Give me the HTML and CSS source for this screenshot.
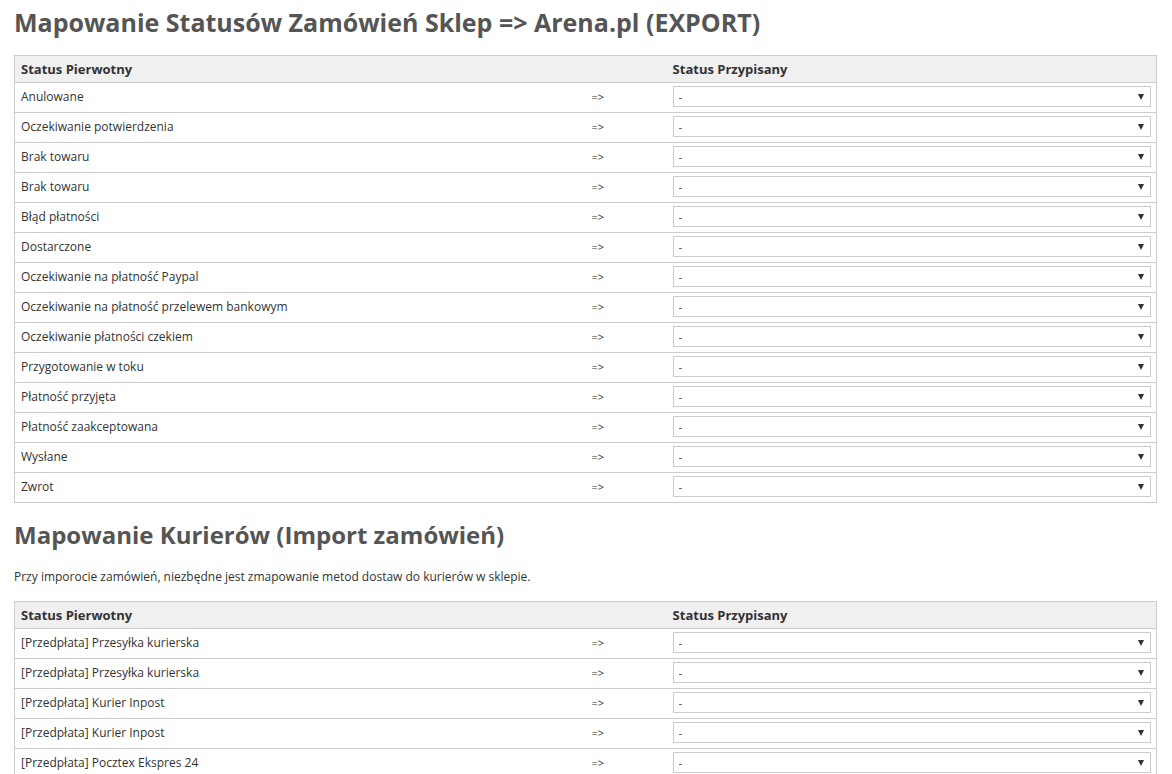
FILE: index.html
```html
<!DOCTYPE html>
<html lang="pl">
<head>
    <meta charset="UTF-8">
    <title>Mapowanie statusów</title>
    <link rel="stylesheet" href="styles.css">
</head>
<body>
    <h1>Mapowanie Statusów Zamówień Sklep =&gt; Arena.pl (EXPORT)</h1>
    <table class="map-table">
        <colgroup>
            <col class="col-src">
            <col class="col-arrow">
            <col class="col-dst">
        </colgroup>
        <tr><th>Status Pierwotny</th><th></th><th>Status Przypisany</th></tr>
        <tr><td>Anulowane</td><td class="arrow">=&gt;</td><td><div class="select-wrap"><select><option>-</option></select></div></td></tr>
        <tr><td>Oczekiwanie potwierdzenia</td><td class="arrow">=&gt;</td><td><div class="select-wrap"><select><option>-</option></select></div></td></tr>
        <tr><td>Brak towaru</td><td class="arrow">=&gt;</td><td><div class="select-wrap"><select><option>-</option></select></div></td></tr>
        <tr><td>Brak towaru</td><td class="arrow">=&gt;</td><td><div class="select-wrap"><select><option>-</option></select></div></td></tr>
        <tr><td>Błąd płatności</td><td class="arrow">=&gt;</td><td><div class="select-wrap"><select><option>-</option></select></div></td></tr>
        <tr><td>Dostarczone</td><td class="arrow">=&gt;</td><td><div class="select-wrap"><select><option>-</option></select></div></td></tr>
        <tr><td>Oczekiwanie na płatność Paypal</td><td class="arrow">=&gt;</td><td><div class="select-wrap"><select><option>-</option></select></div></td></tr>
        <tr><td>Oczekiwanie na płatność przelewem bankowym</td><td class="arrow">=&gt;</td><td><div class="select-wrap"><select><option>-</option></select></div></td></tr>
        <tr><td>Oczekiwanie płatności czekiem</td><td class="arrow">=&gt;</td><td><div class="select-wrap"><select><option>-</option></select></div></td></tr>
        <tr><td>Przygotowanie w toku</td><td class="arrow">=&gt;</td><td><div class="select-wrap"><select><option>-</option></select></div></td></tr>
        <tr><td>Płatność przyjęta</td><td class="arrow">=&gt;</td><td><div class="select-wrap"><select><option>-</option></select></div></td></tr>
        <tr><td>Płatność zaakceptowana</td><td class="arrow">=&gt;</td><td><div class="select-wrap"><select><option>-</option></select></div></td></tr>
        <tr><td>Wysłane</td><td class="arrow">=&gt;</td><td><div class="select-wrap"><select><option>-</option></select></div></td></tr>
        <tr><td>Zwrot</td><td class="arrow">=&gt;</td><td><div class="select-wrap"><select><option>-</option></select></div></td></tr>
    </table>

    <h1 class="second">Mapowanie Kurierów (Import zamówień)</h1>
    <p class="note">Przy imporocie zamówień, niezbędne jest zmapowanie metod dostaw do kurierów w sklepie.</p>
    <table class="map-table">
        <colgroup>
            <col class="col-src">
            <col class="col-arrow">
            <col class="col-dst">
        </colgroup>
        <tr><th>Status Pierwotny</th><th></th><th>Status Przypisany</th></tr>
        <tr><td>[Przedpłata] Przesyłka kurierska</td><td class="arrow">=&gt;</td><td><div class="select-wrap"><select><option>-</option></select></div></td></tr>
        <tr><td>[Przedpłata] Przesyłka kurierska</td><td class="arrow">=&gt;</td><td><div class="select-wrap"><select><option>-</option></select></div></td></tr>
        <tr><td>[Przedpłata] Kurier Inpost</td><td class="arrow">=&gt;</td><td><div class="select-wrap"><select><option>-</option></select></div></td></tr>
        <tr><td>[Przedpłata] Kurier Inpost</td><td class="arrow">=&gt;</td><td><div class="select-wrap"><select><option>-</option></select></div></td></tr>
        <tr><td>[Przedpłata] Pocztex Ekspres 24</td><td class="arrow">=&gt;</td><td><div class="select-wrap"><select><option>-</option></select></div></td></tr>
    </table>
</body>
</html>
```

FILE: styles.css
```css
body {
    font-family: 'Open Sans', 'Liberation Sans', sans-serif;
    color: #333;
    font-size: 12px;
    margin: 0;
    padding: 0 15px 0 14px;
    background-color: #fff;
}
h1 {
    font-size: 25px;
    font-weight: 700;
    color: #555;
    line-height: 36px;
    margin: 4px 0 15px;
}
h1.second {
    font-size: 24px;
    margin: 14px 0 0;
}
.note {
    font-size: 12px;
    margin: 16px 0 16px;
    line-height: 16px;
}
.map-table {
    width: 100%;
    border-collapse: collapse;
    border: 1px solid #ccc;
}
.col-src {
    width: 50%;
}
.col-arrow {
    width: 7.1%;
}
.col-dst {
    width: 42.9%;
}
th {
    background-color: #f0f0f0;
    font-size: 13px;
    font-weight: 700;
    text-align: left;
    height: 26px;
    padding: 0 5px 0 6px;
}
td {
    height: 27px;
    padding: 0 5px 2px 6px;
    border-top: 1px solid #ccc;
}
td.arrow {
    font-size: 11px;
}
.select-wrap {
    position: relative;
}
.select-wrap select {
    appearance: none;
    -webkit-appearance: none;
    width: 100%;
    height: 21px;
    border: 1px solid #ccc;
    background: #fff;
    font-family: inherit;
    font-size: 11px;
    color: #333;
    padding: 0 5px;
    margin: 0;
    display: block;
}
.select-wrap::after {
    content: "";
    position: absolute;
    right: 7px;
    top: 8px;
    border-left: 3px solid transparent;
    border-right: 3px solid transparent;
    border-top: 6px solid #333;
    pointer-events: none;
}
```
